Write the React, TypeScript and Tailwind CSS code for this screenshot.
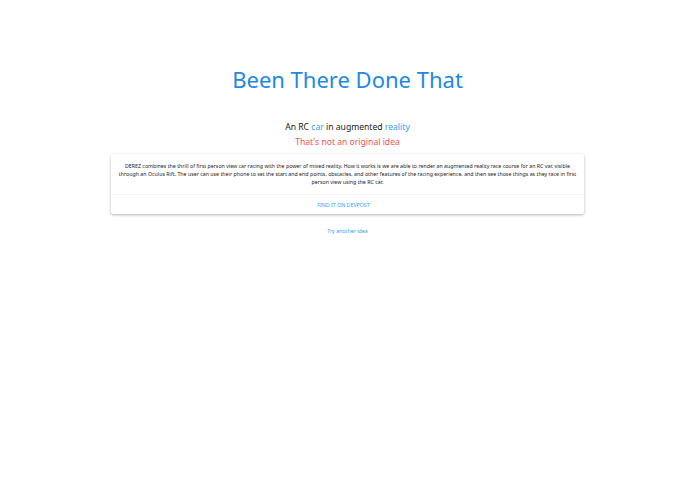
export default function App() {
  return (
    <main className="min-h-screen bg-white pt-[65px] text-center font-['Noto_Sans','Open_Sans',sans-serif]">
      <h1 className="text-[22px] leading-[28px] text-[#1e88e5]">Been There Done That</h1>

      <p className="mt-[26px] text-[8.6px] leading-[16px] text-[#212121]">
        An RC <a className="text-[#2f9ff5]">car</a> in augmented <a className="text-[#2f9ff5]">reality</a>
      </p>
      <p className="mt-[-1px] text-[8.6px] leading-[16px] text-[#ef5350]">That's not an original idea</p>

      <div className="mx-auto mt-[4px] w-[473px] rounded-[2px] bg-white shadow-[0_1px_3px_rgba(0,0,0,0.3)]">
        <div className="px-[5px] pt-[8px] pb-[8px] text-[5.27px] leading-[8px] text-[#212121]">
          DEREZ combines the thrill of first person view car racing with the power of mixed reality. How it works is we are able to render an augmented reality race course for an RC var, visible through an Oculus Rift. The user can use their phone to set the start and end points, obstacles, and other features of the racing experience, and then see those things as they race in first person view using the RC car.
        </div>
        <div className="border-t border-[#f5f5f5] pt-[7px] pb-[6px] pr-[8px] text-[5.27px] leading-[6px] text-[#2f9ff5]">
          <a>FIND IT ON DEVPOST</a>
        </div>
      </div>

      <a className="mt-[13px] block text-[5.27px] leading-[8px] text-[#2f9ff5]">Try another idea</a>
    </main>
  );
}
